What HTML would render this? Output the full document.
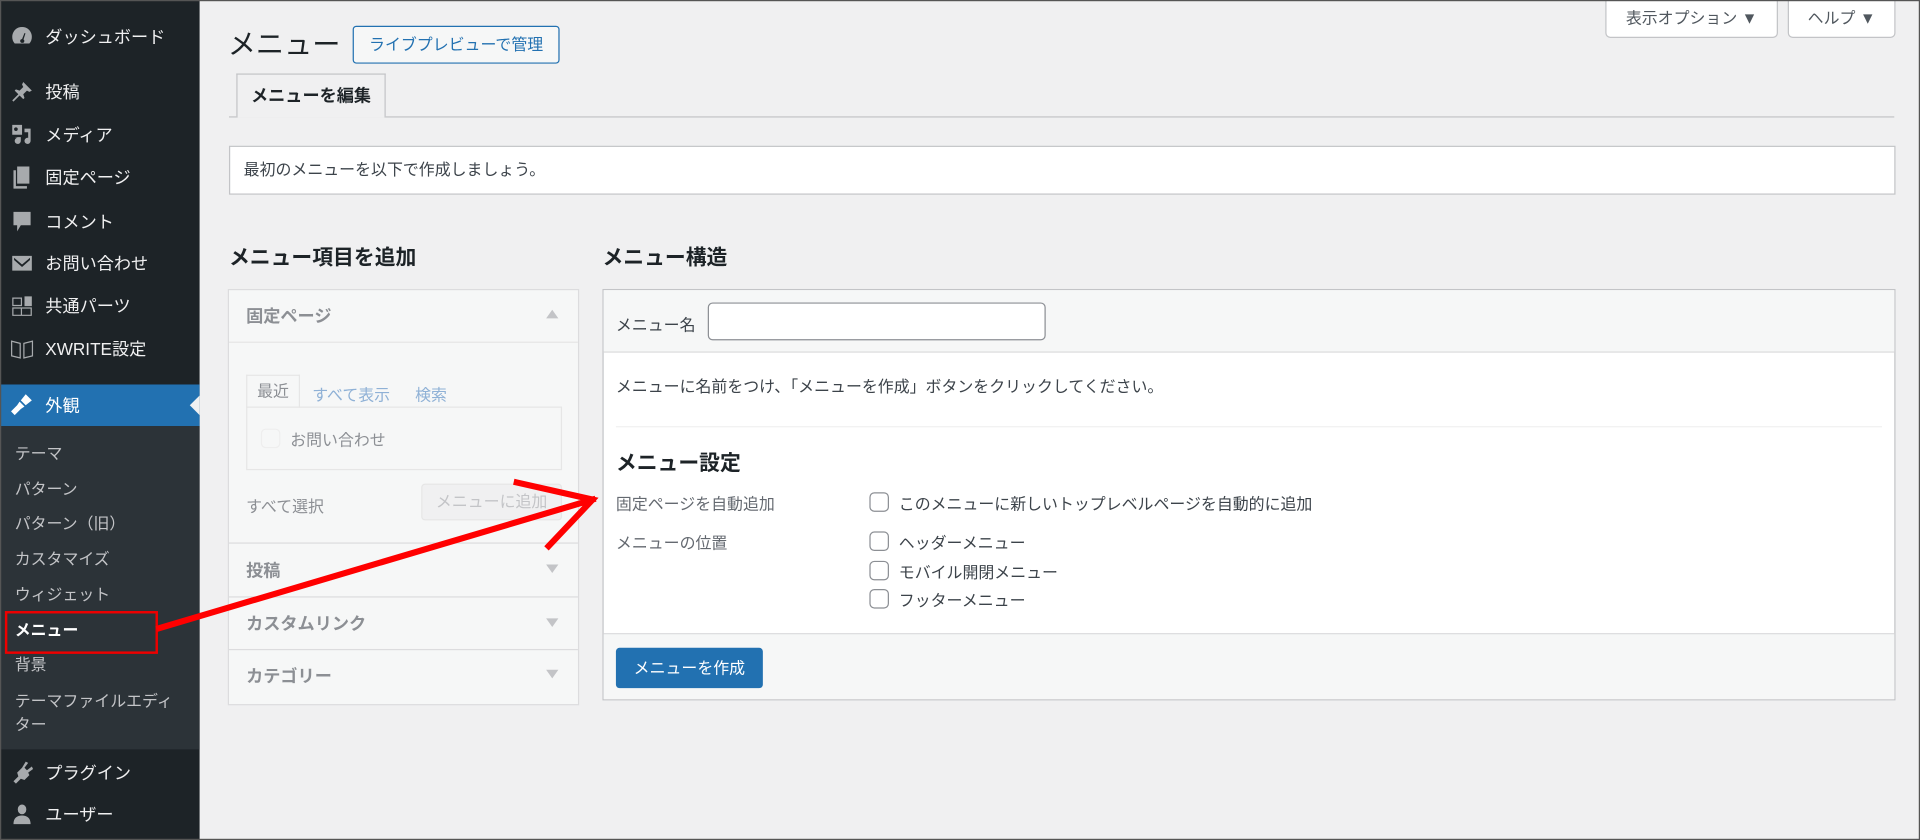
<!DOCTYPE html>
<html><head><meta charset="utf-8"><style>
*{box-sizing:border-box;margin:0;padding:0}
html,body{width:1920px;height:840px;overflow:hidden;background:#f0f0f1}
body{font-family:"Liberation Sans","Noto Sans CJK JP",sans-serif;color:#1d2327}
#w{position:absolute;left:0;top:0;width:1568px;height:686px;transform:scale(1.22449);transform-origin:0 0;background:#f0f0f1;overflow:hidden}
.a{position:absolute;white-space:nowrap}
#side{position:absolute;left:0;top:0;width:163px;height:686px;background:#1d2327}
.mi{position:absolute;left:37px;color:#f0f0f1;font-size:14px;line-height:20px}
.ic{position:absolute;left:8px;width:20px;height:20px;fill:#a7aaad}
.sm{position:absolute;left:12px;color:#c3c4c7;font-size:13px;line-height:18px}
.btn{position:absolute;background:#fff;border:1px solid #c3c4c7;font-size:13px;color:#50575e;text-align:center}
.cb{position:absolute;width:16px;height:16px;border:1px solid #8c8f94;border-radius:4px;background:#fff}
.hd{font-size:14px;font-weight:bold;color:#50575e}
</style></head><body><div id="w">
<div id="side">
 <div class="a" style="left:0;top:314px;width:163px;height:34px;background:#2271b1"></div>
 <div class="a" style="left:155px;top:323px;width:0;height:0;border-top:8px solid transparent;border-bottom:8px solid transparent;border-right:8px solid #f0f0f1"></div>
 <div class="a" style="left:0;top:348px;width:163px;height:264px;background:#2c3338"></div>
 <svg class="ic" style="top:20px" viewBox="0 0 20 20"><path d="M10 2a8 8 0 0 0-8 8 8 8 0 0 0 2 5.5h12A8 8 0 0 0 18 10a8 8 0 0 0-8-8zm0 13a1.5 1.5 0 1 1 0-3l2-5 .8.3-1.6 5A1.5 1.5 0 0 1 10 15z"/></svg>
 <div class="mi" style="top:20px">ダッシュボード</div>
 <svg class="ic" style="top:65px" viewBox="0 0 20 20"><path d="M11 2l7 7-2 1-2-1-3 3 1 3-1 1-3-3-5 5-1-1 5-5-3-3 1-1 3 1 3-3-1-2z"/></svg>
 <div class="mi" style="top:65px">投稿</div>
 <svg class="ic" style="top:100px" viewBox="0 0 20 20"><path d="M2 2h8v8H2zM5 4a1.5 1.5 0 1 0 0 3 1.5 1.5 0 0 0 0-3zM12 5h5v10a2.5 2.5 0 1 1-2-2.4V8h-3zM4 12h5v3a2.5 2.5 0 1 1-2-2.4z"/></svg>
 <div class="mi" style="top:100px">メディア</div>
 <svg class="ic" style="top:135px" viewBox="0 0 20 20"><path d="M6 1h10v14H6zM3 4h2v13h9v2H3z"/></svg>
 <div class="mi" style="top:135px">固定ページ</div>
 <svg class="ic" style="top:171px" viewBox="0 0 20 20"><path d="M3 2h14v11H9l-3 5v-5H3z"/></svg>
 <div class="mi" style="top:171px">コメント</div>
 <svg class="ic" style="top:205px" viewBox="0 0 20 20"><path d="M2 4h16v12H2zM3.5 5.5L10 11l6.5-5.5v1.8L10 13 3.5 7.3z" fill-rule="evenodd"/></svg>
 <div class="mi" style="top:205px">お問い合わせ</div>
 <svg class="ic" style="top:240px" viewBox="0 0 20 20"><path d="M2 3h8v7H2zm1 1v5h6V4zM12 2h6v8h-6zM2 11h16v7H2zm1 1v5h6v-5zm7 0v5h7v-5z" fill-rule="evenodd"/></svg>
 <div class="mi" style="top:240px">共通パーツ</div>
 <svg class="ic" style="top:275px" viewBox="0 0 20 20"><path d="M1 3l8 2v13l-8-2zm1 1.3v10.9l6 1.5V5.8zM19 3l-8 2v13l8-2zm-1 1.3v10.9l-6 1.5V5.8z" fill-rule="evenodd"/></svg>
 <div class="mi" style="top:275px">XWRITE設定</div>
 <svg class="ic" style="top:320px;fill:#fff" viewBox="0 0 20 20"><path d="M13 2l5 5-5 4-4-4zM8 8l4 4-3 2-5 5-3-3 5-5z"/></svg>
 <div class="mi" style="top:321px;color:#fff">外観</div>
 <div class="sm" style="top:362px">テーマ</div>
 <div class="sm" style="top:391px">パターン</div>
 <div class="sm" style="top:419px">パターン（旧）</div>
 <div class="sm" style="top:448px">カスタマイズ</div>
 <div class="sm" style="top:477px">ウィジェット</div>
 <div class="sm" style="top:506px;color:#fff;font-weight:bold">メニュー</div>
 <div class="sm" style="top:534px">背景</div>
 <div class="sm" style="top:563px;white-space:normal;width:132px;line-height:19px">テーマファイルエディター</div>
 <svg class="ic" style="top:621px" viewBox="0 0 20 20"><path d="M13 1l2 1-3 4 2 2 4-3 1 2-4 3 1 2-4 4-3-1-4 4-2-2 4-4-1-3 4-4z"/></svg>
 <div class="mi" style="top:621px">プラグイン</div>
 <svg class="ic" style="top:655px" viewBox="0 0 20 20"><path d="M10 2a3.5 4 0 1 0 0 8 3.5 4 0 0 0 0-8zM3 18c0-5 3-7 7-7s7 2 7 7z"/></svg>
 <div class="mi" style="top:655px">ユーザー</div>
</div>
<div class="a" style="left:4px;top:499px;width:125px;height:35px;border:2px solid #e00"></div>

<div class="btn" style="left:1311px;top:-1px;width:141px;height:32px;line-height:30px;border-radius:0 0 4px 4px">表示オプション ▼</div>
<div class="btn" style="left:1460px;top:-1px;width:88px;height:32px;line-height:30px;border-radius:0 0 4px 4px">ヘルプ ▼</div>

<div class="a" style="left:186px;top:20px;font-size:23px;line-height:32px;color:#1d2327">メニュー</div>
<div class="a" style="left:288px;top:21px;width:169px;height:31px;border:1px solid #2271b1;border-radius:3px;color:#2271b1;font-size:13px;line-height:29px;text-align:center;background:#f6f7f7">ライブプレビューで管理</div>
<div class="a" style="left:187px;top:95px;width:1360px;height:1px;background:#c3c4c7"></div>
<div class="a" style="left:193px;top:60px;width:122px;height:36px;border:1px solid #c3c4c7;border-bottom:none;background:#f0f0f1;font-size:14px;font-weight:bold;line-height:34px;text-align:center">メニューを編集</div>

<div class="a" style="left:187px;top:119px;width:1361px;height:40px;background:#fff;border:1px solid #c3c4c7;font-size:13px;line-height:38px;padding-left:11px;color:#3c434a">最初のメニューを以下で作成しましょう。</div>

<div class="a" style="left:187px;top:199px;font-size:17px;font-weight:bold;line-height:24px">メニュー項目を追加</div>
<div class="a" style="left:492px;top:199px;font-size:17px;font-weight:bold;line-height:24px">メニュー構造</div>

<div class="a" style="left:186px;top:236px;width:287px;height:340px;background:#f6f7f7;border:1px solid #dcdcde">
 <div class="a hd" style="left:14px;top:11px;color:#8c8f94">固定ページ</div>
 <div class="a" style="left:259px;top:16px;border-left:5px solid transparent;border-right:5px solid transparent;border-bottom:7px solid #c3c4c7"></div>
 <div class="a" style="left:0;top:42px;width:285px;height:1px;background:#e6e6e6"></div>
 <div class="a" style="left:14px;top:69px;width:44px;height:27px;border:1px solid #e6e6e6;border-bottom:none;background:#f6f7f7;font-size:13px;color:#8c8f94;text-align:center;line-height:26px">最近</div>
 <div class="a" style="left:68px;top:75px;font-size:13px;color:#8fb1d6">すべて表示</div>
 <div class="a" style="left:152px;top:75px;font-size:13px;color:#8fb1d6">検索</div>
 <div class="a" style="left:14px;top:95px;width:258px;height:52px;border:1px solid #e6e6e6"></div>
 <div class="a" style="left:26px;top:113px;width:16px;height:16px;border:1px solid #eee;border-radius:4px;background:#f6f7f7"></div>
 <div class="a" style="left:50px;top:112px;font-size:13px;color:#8c8f94">お問い合わせ</div>
 <div class="a" style="left:14px;top:166px;font-size:13px;color:#8c8f94">すべて選択</div>
 <div class="a" style="left:157px;top:158px;width:115px;height:30px;border:1px solid #e6e6e6;border-radius:3px;background:#f0f0f1;font-size:13px;color:#c3c4c7;text-align:center;line-height:28px">メニューに追加</div>
 <div class="a" style="left:0;top:206px;width:285px;height:1px;background:#dcdcde"></div>
 <div class="a hd" style="left:14px;top:219px;color:#8c8f94">投稿</div>
 <div class="a" style="left:259px;top:224px;border-left:5px solid transparent;border-right:5px solid transparent;border-top:7px solid #c3c4c7"></div>
 <div class="a" style="left:0;top:250px;width:285px;height:1px;background:#dcdcde"></div>
 <div class="a hd" style="left:14px;top:262px;color:#8c8f94">カスタムリンク</div>
 <div class="a" style="left:259px;top:268px;border-left:5px solid transparent;border-right:5px solid transparent;border-top:7px solid #c3c4c7"></div>
 <div class="a" style="left:0;top:293px;width:285px;height:1px;background:#dcdcde"></div>
 <div class="a hd" style="left:14px;top:305px;color:#8c8f94">カテゴリー</div>
 <div class="a" style="left:259px;top:310px;border-left:5px solid transparent;border-right:5px solid transparent;border-top:7px solid #c3c4c7"></div>
</div>

<div class="a" style="left:492px;top:236px;width:1056px;height:336px;background:#fff;border:1px solid #c3c4c7">
 <div class="a" style="left:0;top:0;width:1054px;height:51px;background:#f6f7f7;border-bottom:1px solid #dcdcde"></div>
 <div class="a" style="left:10px;top:18px;font-size:13px;color:#3c434a">メニュー名</div>
 <div class="a" style="left:85px;top:10px;width:276px;height:31px;border:1px solid #8c8f94;border-radius:4px;background:#fff"></div>
 <div class="a" style="left:10px;top:68px;font-size:13px;color:#3c434a">メニューに名前をつけ、「メニューを作成」ボタンをクリックしてください。</div>
 <div class="a" style="left:10px;top:111px;width:1034px;height:1px;background:#f0f0f1"></div>
 <div class="a" style="left:10px;top:130px;font-size:17px;font-weight:bold;line-height:24px">メニュー設定</div>
 <div class="a" style="left:10px;top:164px;font-size:13px;color:#646970">固定ページを自動追加</div>
 <div class="cb" style="left:217px;top:165px"></div>
 <div class="a" style="left:241px;top:164px;font-size:13px;color:#3c434a">このメニューに新しいトップレベルページを自動的に追加</div>
 <div class="a" style="left:10px;top:196px;font-size:13px;color:#646970">メニューの位置</div>
 <div class="cb" style="left:217px;top:197px"></div>
 <div class="a" style="left:241px;top:196px;font-size:13px;color:#3c434a">ヘッダーメニュー</div>
 <div class="cb" style="left:217px;top:221px"></div>
 <div class="a" style="left:241px;top:220px;font-size:13px;color:#3c434a">モバイル開閉メニュー</div>
 <div class="cb" style="left:217px;top:244px"></div>
 <div class="a" style="left:241px;top:243px;font-size:13px;color:#3c434a">フッターメニュー</div>
 <div class="a" style="left:0;top:280px;width:1054px;height:54px;background:#f6f7f7;border-top:1px solid #dcdcde"></div>
 <div class="a" style="left:10px;top:292px;width:120px;height:33px;background:#2271b1;border-radius:3px;color:#fff;font-size:13px;line-height:33px;text-align:center">メニューを作成</div>
</div>

<svg class="a" style="left:0;top:0" width="1568" height="686"><g stroke="#f00" stroke-width="5" fill="none" stroke-linecap="square"><path d="M130 513L484 408M422 394L484 408L448 446"/></g></svg>
<div class="a" style="left:0;top:0;width:1568px;height:686px;border:1px solid #555"></div>
</div></body></html>
